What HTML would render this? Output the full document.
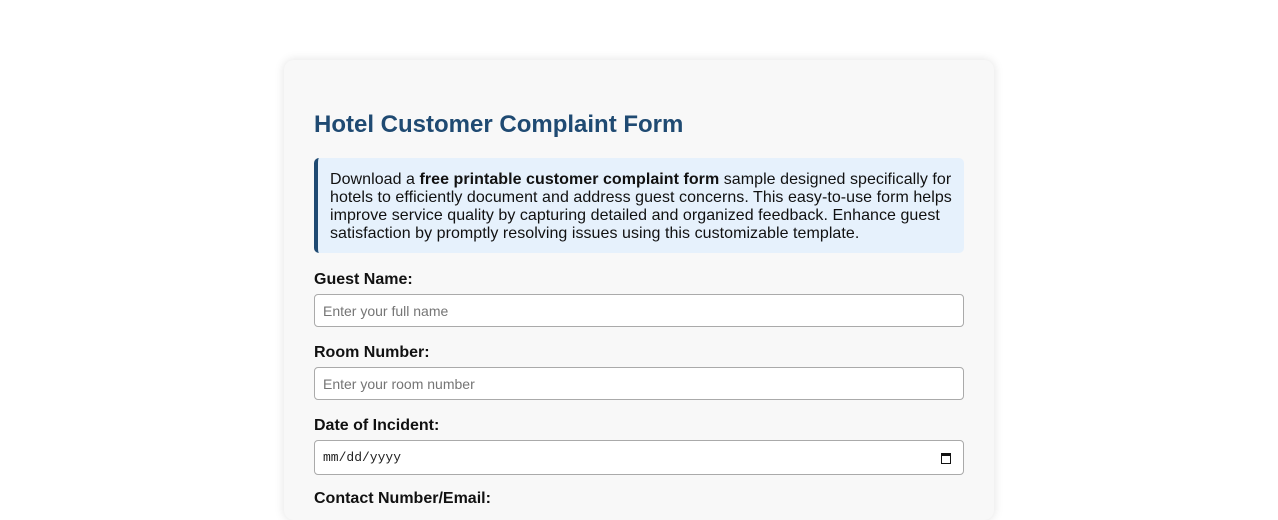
<!DOCTYPE html>
<html><head><style>
body{margin:0;background:#fff;font-family:"Liberation Sans",Arial,sans-serif;}
.card{position:absolute;left:284px;top:60px;width:710px;height:460px;background:#f8f8f8;border-radius:10px;box-shadow:0 0 10px rgba(0,0,0,0.12);}
h2{position:absolute;left:30px;top:51px;margin:0;font-size:24px;color:#1f4a72;font-weight:bold;line-height:28px;}
.info{position:absolute;left:30px;top:98px;width:650px;height:95px;box-sizing:border-box;background:#e6f1fc;border-left:4px solid #1f4a72;border-radius:5px;padding:13px 8px 10px 12px;font-size:16px;line-height:18px;color:#111;letter-spacing:0.05px;}
.lbl{position:absolute;left:30px;font-size:16px;font-weight:bold;color:#111;line-height:18px;}
.inp{position:absolute;left:30px;width:650px;box-sizing:border-box;background:#fff;border:1px solid #aaa;border-radius:4px;font-size:14px;color:#757575;padding-left:8px;display:flex;align-items:center;}
</style></head><body>
<div class="card">
<h2>Hotel Customer Complaint Form</h2>
<div class="info">Download a <b>free printable customer complaint form</b> sample designed specifically for hotels to efficiently document and address guest concerns. This easy-to-use form helps improve service quality by capturing detailed and organized feedback. Enhance guest satisfaction by promptly resolving issues using this customizable template.</div>
<div class="lbl" style="top:211px">Guest Name:</div>
<div class="inp" style="top:234px;height:33px">Enter your full name</div>
<div class="lbl" style="top:284px">Room Number:</div>
<div class="inp" style="top:307px;height:33px">Enter your room number</div>
<div class="lbl" style="top:357px">Date of Incident:</div>
<div class="inp" style="top:380px;height:35px;color:#222;font-family:'Liberation Mono',monospace;font-size:13px;">mm/dd/yyyy
<svg style="position:absolute;right:12px;top:11px" width="10" height="12" viewBox="0 0 10 12"><rect x="0.5" y="1.5" width="9" height="10" fill="none" stroke="#111"/><rect x="0" y="1" width="10" height="3" fill="#111"/></svg></div>
<div class="lbl" style="top:430px">Contact Number/Email:</div>
</div>
</body></html>
